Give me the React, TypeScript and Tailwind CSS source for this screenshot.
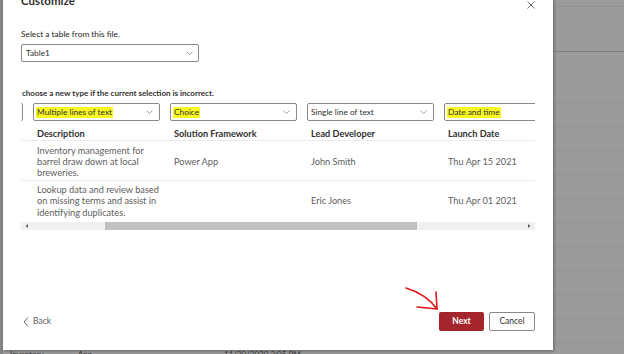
import React from "react";

const Chevron = () => (
  <svg width="7" height="4" viewBox="0 0 7 4" className="shrink-0">
    <path d="M0.5 0.5 L3.5 3.5 L6.5 0.5" fill="none" stroke="#8a8886" strokeWidth="0.8" />
  </svg>
);

function TypeSelect({ label, hl, clipRight }: { label: string; hl?: boolean; clipRight?: boolean }) {
  return (
    <div className="h-[18px] w-[127px] shrink-0 flex items-center justify-between pl-[3px] pr-[6px] border border-[#8a8886] rounded-[2px] bg-white">
      <span
        className={
          "text-[8.3px] leading-[11px] text-[#323130] " + (hl ? "bg-[#f7f721] px-[1px] -ml-[1px]" : "")
        }
      >
        {label}
      </span>
      {!clipRight && <Chevron />}
    </div>
  );
}

const COLS = [
  { sel: "", hl: false, head: "", c1: [""], c2: [""] },
  {
    sel: "Multiple lines of text",
    hl: true,
    head: "Description",
    c1: ["Inventory management for", "barrel draw down at local", "breweries."],
    c2: ["Lookup data and review based", "on missing terms and assist in", "identifying duplicates."],
  },
  { sel: "Choice", hl: true, head: "Solution Framework", c1: ["Power App"], c2: [""] },
  { sel: "Single line of text", hl: false, head: "Lead Developer", c1: ["John Smith"], c2: ["Eric Jones"] },
  { sel: "Date and time", hl: true, head: "Launch Date", c1: ["Thu Apr 15 2021"], c2: ["Thu Apr 01 2021"] },
];

function Cell({ lines }: { lines: string[] }) {
  return (
    <div className="w-[137px] shrink-0 pl-[4px] pt-[2px] flex flex-col justify-center text-[9.2px] leading-[11.3px] text-[#605e5c]">
      {lines.map((l, i) => (
        <div key={i} className="whitespace-nowrap">
          {l || "\u00a0"}
        </div>
      ))}
    </div>
  );
}

export default function App() {
  const bgRows = Array.from({ length: 10 });
  return (
    <div className="relative w-[624px] h-[354px] overflow-hidden bg-[#9b9b9b] font-['Lato','Open_Sans',sans-serif]">
      {/* background page */}
      <div className="flex flex-col">
        <div className="h-[7px] border-b border-[#929292]" />
        <div className="h-[45px] border-b border-[#7f7f7f]" />
        <div className="h-[51px] border-b border-[#949494]" />
        {bgRows.map((_, i) => (
          <div key={i} className="h-[24px] border-b border-[#949494]" />
        ))}
        <div className="h-[24px] flex text-[8px] leading-[10px] text-[#3a3a3a] pt-[6px]">
          <span className="ml-[10px]">Inventory</span>
          <span className="ml-[34px]">App</span>
          <span className="ml-[132px]">11/20/2020 3:05 PM</span>
        </div>
      </div>
      <div className="absolute left-0 top-0 w-[3px] h-full bg-[#858585]" />

      {/* dialog */}
      <div className="absolute left-[3px] top-[-20px] w-[550px] h-[370px] bg-white shadow-[1px_1px_3px_rgba(0,0,0,0.35)] flex flex-col px-[18px]">
        <div className="mt-[11px] h-[20px] text-[11.5px] leading-[20px] font-bold text-[#323130]">Customize</div>
        <button className="absolute right-[18px] top-[20px] w-[9px] h-[9px] flex items-center justify-center">
          <svg width="8" height="8" viewBox="0 0 8 8">
            <path d="M0.5 0.5 L7.5 7.5 M7.5 0.5 L0.5 7.5" stroke="#605e5c" strokeWidth="0.9" />
          </svg>
        </button>

        <div className="mt-[17px] h-[12px] text-[8.3px] leading-[12px] font-medium text-[#323130]">
          Select a table from this file.
        </div>
        <div className="mt-[4px] w-[178px] h-[18px] border border-[#8a8886] rounded-[2px] flex items-center justify-between pl-[4px] pr-[5px]">
          <span className="text-[8.3px] text-[#323130]">Table1</span>
          <Chevron />
        </div>

        <div className="mt-[25px] h-[12px] ml-[1px] text-[8px] leading-[12px] font-bold text-[#323130]">
          choose a new type if the current selection is incorrect.
        </div>

        {/* table */}
        <div className="mt-[4px] w-[514px] overflow-hidden">
          <div className="flex flex-col ml-[-125px]">
            <div className="flex gap-[10px]">
              {COLS.map((c, i) => (
                <TypeSelect key={i} label={c.sel} hl={c.hl} clipRight={i === 4} />
              ))}
            </div>
            <div className="flex h-[20px] pt-[6px] items-center border-b border-[#edebe9] ml-[104px]">
              <div className="flex -ml-[104px]">
                {COLS.map((c, i) => (
                  <div
                    key={i}
                    className="w-[137px] shrink-0 pl-[4px] text-[9.2px] font-bold text-[#323130] whitespace-nowrap"
                  >
                    {c.head}
                  </div>
                ))}
              </div>
            </div>
            <div className="flex h-[40px] border-b border-[#edebe9] ml-[104px]">
              <div className="flex -ml-[104px]">
                {COLS.map((c, i) => (
                  <Cell key={i} lines={c.c1} />
                ))}
              </div>
            </div>
            <div className="flex h-[38px] ml-[104px]">
              <div className="flex -ml-[104px]">
                {COLS.map((c, i) => (
                  <Cell key={i} lines={c.c2} />
                ))}
              </div>
            </div>
          </div>
          {/* scrollbar */}
          <div className="mt-[3px] h-[8px] bg-[#f0f0f0] flex items-center">
            <svg width="8" height="8" viewBox="0 0 8 8" className="shrink-0 ml-[2px]">
              <path d="M5 2 L2.5 4 L5 6 Z" fill="#606060" />
            </svg>
            <div className="ml-[74px] w-[312px] h-[8px] bg-[#c1c1c1]" />
            <div className="flex-1" />
            <svg width="8" height="8" viewBox="0 0 8 8" className="shrink-0 mr-[2px]">
              <path d="M3 2 L5.5 4 L3 6 Z" fill="#606060" />
            </svg>
          </div>
        </div>

        {/* footer */}
        <div className="mt-auto mb-[19px] flex items-center">
          <button className="flex items-center gap-[4px] ml-[2px] text-[8.5px] text-[#605e5c]">
            <svg width="6" height="10" viewBox="0 0 6 10">
              <path d="M5 0.5 L1 5 L5 9.5" fill="none" stroke="#605e5c" strokeWidth="0.9" />
            </svg>
            Back
          </button>
          <div className="flex-1" />
          <button className="w-[45px] h-[19px] bg-[#a4262c] rounded-[2px] text-white text-[8.5px] font-bold flex items-center justify-center">
            Next
          </button>
          <button className="ml-[5px] w-[46px] h-[19px] border border-[#8a8886] rounded-[2px] text-[#323130] text-[8.5px] flex items-center justify-center">
            Cancel
          </button>
        </div>
      </div>

      {/* red annotation arrow */}
      <svg className="absolute left-[400px] top-[284px]" width="44" height="32" viewBox="0 0 44 32">
        <path
          d="M6 4 C16 7 29 14 37 25"
          fill="none"
          stroke="#e3171b"
          strokeWidth="1.6"
          strokeLinecap="round"
        />
        <path d="M36 8 L37 25 L17 23" fill="none" stroke="#e3171b" strokeWidth="1.6" strokeLinecap="round" strokeLinejoin="round" />
      </svg>
    </div>
  );
}
